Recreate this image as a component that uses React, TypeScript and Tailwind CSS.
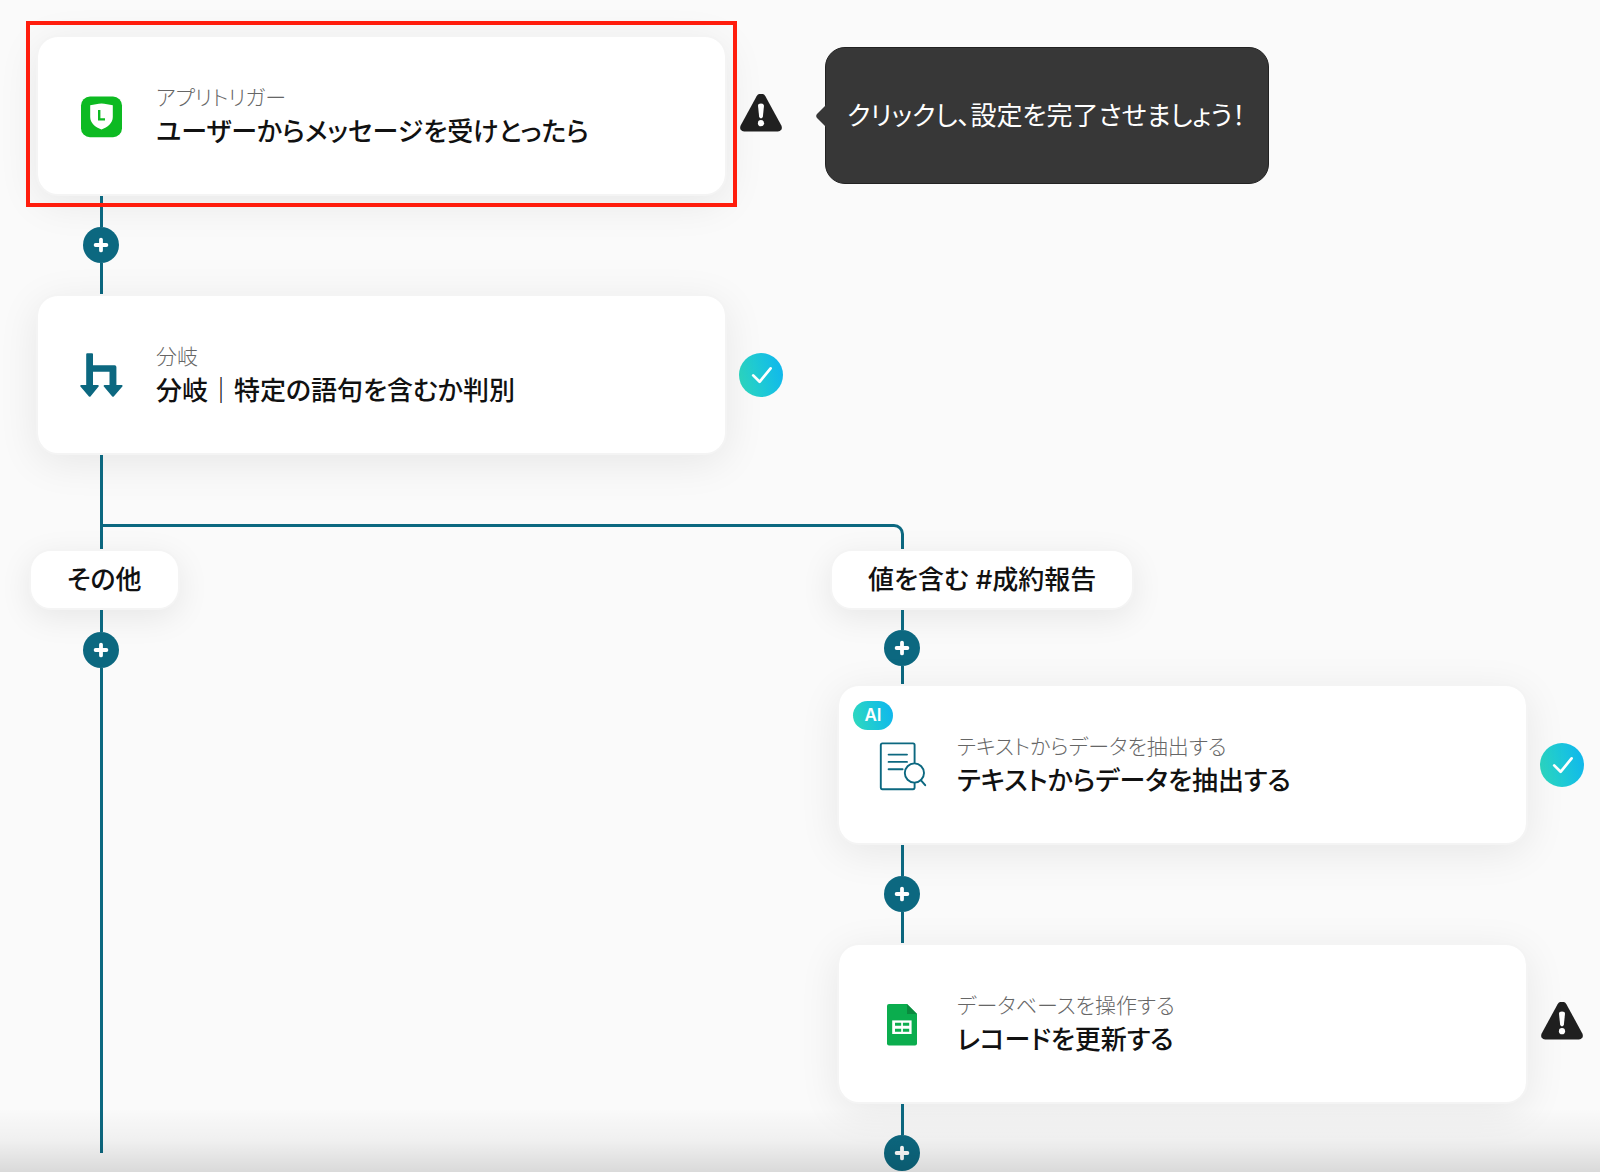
import React from 'react';

type Status = 'warning' | 'done';

interface FlowCardProps {
  icon: React.ReactNode;
  label: string;
  title: string;
  status: Status;
  ai?: boolean;
  highlighted?: boolean;
  tooltip?: string;
}

const LineAppIcon: React.FC = () => (
  <svg viewBox="0 0 48 48" className="size-12" aria-hidden="true">
    <rect x="3" y="4.6" width="41" height="40.6" rx="9" fill="#0dba22" />
    <path
      d="M12.2 13.2C16 12.8 20 11.4 23.5 11.4C27 11.4 31 12.8 34.8 13.2V25C34.8 31 29.6 35.2 23.5 37.6C17.4 35.2 12.2 31 12.2 25Z"
      fill="#fff"
    />
    <path d="M21.2 18v9.4h5.8" fill="none" stroke="#0dba22" strokeWidth="2.4" />
  </svg>
);

const BranchIcon: React.FC = () => (
  <svg viewBox="0 0 48 48" className="size-12" aria-hidden="true">
    <g fill="#0c6880" stroke="#0c6880" strokeWidth="2" strokeLinejoin="round">
      <path d="M9.2 3.2h4.8v12h22.6q.8 0 .8.8v18.7h-4.9V19.7H14v15H9.2Z" />
      <path d="M3.2 34.9h16.6L11.7 44.8Z" />
      <path d="M26.6 34.9h17L35 44.8Z" />
    </g>
  </svg>
);

const ExtractIcon: React.FC = () => (
  <svg
    viewBox="0 0 48 48"
    className="size-12 overflow-visible"
    fill="none"
    stroke="#0c6880"
    strokeWidth="1.9"
    strokeLinecap="round"
    aria-hidden="true"
  >
    <path d="M35.6 21.6V4Q35.6 2.4 34 2.4H3.4Q1.8 2.4 1.8 4V46.6Q1.8 48.2 3.4 48.2H34Q35.6 48.2 35.6 46.6V41.8" />
    <path d="M9.6 13.6H28M9.6 20.9H28M9.6 28.2H23.6" />
    <circle cx="35.4" cy="32" r="9.6" fill="#fff" />
    <path d="M42 39.4L46.2 44.2" strokeWidth="2" />
  </svg>
);

const SheetsIcon: React.FC = () => (
  <svg viewBox="0 0 48 48" className="size-12" aria-hidden="true">
    <path d="M10 4H28L38 14V43.5Q38 45.5 36 45.5H10Q8 45.5 8 43.5V6Q8 4 10 4Z" fill="#0bad4e" />
    <path d="M28 4V14H38Z" fill="#0a8a3e" />
    <rect x="13.2" y="20.4" width="19.4" height="13.6" fill="#fff" />
    <path d="M16 22.8h6.2v3H16zM23.9 22.8h6.3v3h-6.3zM16 28.7h6.2v3H16zM23.9 28.7h6.3v3h-6.3z" fill="#0bad4e" />
  </svg>
);

const WarningIcon: React.FC = () => (
  <svg viewBox="0 0 44 44" className="size-11 shrink-0" role="img" aria-label="warning">
    <path
      d="M17.6 2.2Q19.2 -.4 22 -.4Q24.8 -.4 26.4 2.2L42.2 31.2Q43.4 33.6 42.4 35.6Q41.2 37.6 38.8 37.6H5.2Q2.8 37.6 1.6 35.6Q.6 33.6 1.8 31.2Z"
      fill="#202020"
    />
    <path d="M19 11.6Q19 9.6 22 9.6Q25 9.6 25 11.6L23.9 22.6Q23.7 24.4 22 24.4Q20.3 24.4 20.1 22.6Z" fill="#fff" />
    <circle cx="22" cy="29.2" r="3.1" fill="#fff" />
  </svg>
);

const DoneIcon: React.FC = () => (
  <span className="flex size-11 shrink-0 rounded-full bg-linear-75 from-[#30dabb] to-[#10b4f0]">
    <svg viewBox="0 0 44 44" className="size-11" role="img" aria-label="done">
      <path
        d="M14.2 22.4L20.6 28.8L31.6 15.4"
        fill="none"
        stroke="#fff"
        strokeWidth="2.7"
        strokeLinecap="round"
        strokeLinejoin="round"
      />
    </svg>
  </span>
);

const AddButton: React.FC = () => (
  <button
    type="button"
    aria-label="add"
    className="relative ml-[47px] flex size-9 shrink-0 items-center justify-center rounded-full bg-[#0c6880]"
  >
    <svg viewBox="0 0 16 16" className="size-4" aria-hidden="true">
      <path d="M8 2.6V13.4M2.6 8H13.4" stroke="#fff" strokeWidth="3.8" strokeLinecap="round" />
    </svg>
  </button>
);

const Line: React.FC<{ className: string }> = ({ className }) => (
  <div className={`relative ml-[64px] w-[3px] shrink-0 bg-[#0c6880] ${className}`} />
);

const Connector: React.FC = () => (
  <>
    <Line className="h-[31px]" />
    <AddButton />
    <Line className="h-[31px]" />
  </>
);

const FlowCard: React.FC<FlowCardProps> = ({ icon, label, title, status, ai, highlighted, tooltip }) => (
  <div className="relative flex items-center gap-3">
    <button
      type="button"
      className="relative flex h-[161px] flex-1 items-center gap-[30px] rounded-[22px] border-2 border-[#f4f4f4] bg-white bg-clip-padding pl-10 text-left shadow-[0_8px_40px_rgba(0,0,0,0.08)]"
    >
      {ai && (
        <span className="absolute top-[15px] left-[14px] flex h-[29px] w-10 items-center justify-center rounded-full bg-linear-75 from-[#30dabb] to-[#10b4f0] text-[17px] font-semibold text-white">
          AI
        </span>
      )}
      {icon}
      <span className="flex flex-col">
        <span className="text-[21px] leading-8 font-light text-[#666]">{label}</span>
        <span className="text-[26px] leading-9 font-medium text-[#111]">{title}</span>
      </span>
    </button>
    {status === 'warning' ? <WarningIcon /> : <DoneIcon />}
    {highlighted && (
      <div className="pointer-events-none absolute -top-[14px] right-[46px] -bottom-[11px] -left-[10px] z-10 border-4 border-[#ff1d0d]" />
    )}
    {tooltip && (
      <div
        role="tooltip"
        className="absolute left-full z-10 ml-[42px] flex h-[137px] items-center rounded-[20px] border border-[#222] bg-[#373737] pr-[23px] pl-[21px] text-[26px] whitespace-nowrap text-white"
      >
        <svg viewBox="0 0 10 22" className="absolute top-[57px] right-full h-[22px] w-[10px]" aria-hidden="true">
          <path d="M10 0L1 9Q-.6 11 1 13L10 22Z" fill="#373737" />
        </svg>
        {tooltip}
      </div>
    )}
  </div>
);

const BranchLabel: React.FC<{ children: React.ReactNode }> = ({ children }) => (
  <div className="relative -ml-[7px] flex h-[61px] items-center self-start rounded-[22px] border-2 border-[#f4f4f4] bg-white px-9 text-[26px] font-medium text-[#111] shadow-[0_8px_32px_rgba(0,0,0,0.08)]">
    {children}
  </div>
);

const App: React.FC = () => {
  return (
    <main className="relative flex min-h-screen flex-col overflow-hidden bg-[#fafafa] pt-[35px] pr-4 pl-9 font-[Inter,'Noto_Sans_CJK_JP',sans-serif] [font-feature-settings:'palt']">
      <div className="grid grid-cols-2 gap-[54px]">
        <div className="flex flex-col">
          <FlowCard
            icon={<LineAppIcon />}
            label="アプリトリガー"
            title="ユーザーからメッセージを受けとったら"
            status="warning"
            highlighted
            tooltip="クリックし、設定を完了させましょう！"
          />
          <Connector />
          <FlowCard icon={<BranchIcon />} label="分岐" title="分岐｜特定の語句を含むか判別" status="done" />
          <Line className="h-[69px]" />
          {/* bracket that feeds both branches */}
          <div className="relative ml-[64px] h-[25px] w-[calc(100%+57px)] rounded-tr-[10px] border-x-3 border-t-3 border-[#0c6880]" />
        </div>
      </div>

      <div className="grid flex-1 grid-cols-2 gap-[54px]">
        <div className="flex flex-col pb-[19px]">
          <BranchLabel>その他</BranchLabel>
          <Line className="h-[22px]" />
          <AddButton />
          <Line className="flex-1" />
        </div>

        <div className="flex flex-col">
          <BranchLabel>値を含む #成約報告</BranchLabel>
          <Line className="h-5" />
          <AddButton />
          <Line className="h-[18px]" />
          <FlowCard
            icon={<ExtractIcon />}
            label="テキストからデータを抽出する"
            title="テキストからデータを抽出する"
            status="done"
            ai
          />
          <Connector />
          <FlowCard
            icon={<SheetsIcon />}
            label="データベースを操作する"
            title="レコードを更新する"
            status="warning"
          />
          <Line className="h-[31px]" />
          <AddButton />
        </div>
      </div>

      <div className="pointer-events-none absolute inset-x-0 bottom-0 h-16 bg-linear-to-b from-transparent via-black/4 to-black/13" />
    </main>
  );
};

export default App;
